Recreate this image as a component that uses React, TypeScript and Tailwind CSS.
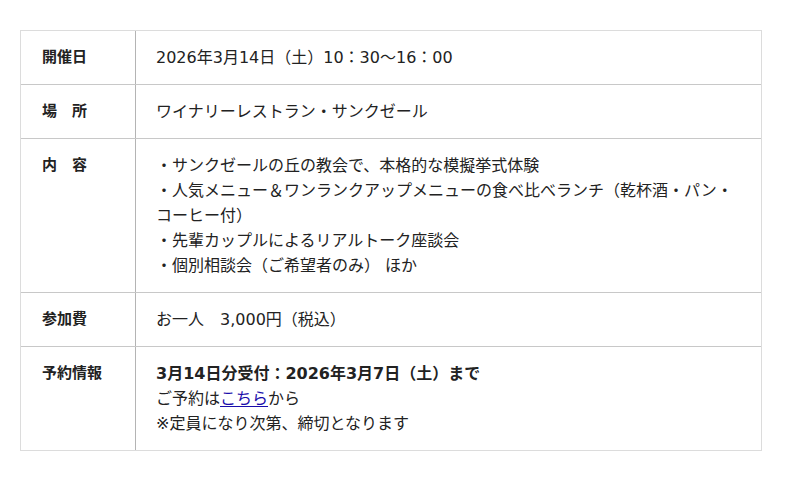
const rows: { label: string; content: React.ReactNode }[] = [
  { label: '開催日', content: '2026年3月14日（土）10：30〜16：00' },
  { label: '場　所', content: 'ワイナリーレストラン・サンクゼール' },
  {
    label: '内　容',
    content: (
      <>
        ・サンクゼールの丘の教会で、本格的な模擬挙式体験
        <br />
        ・人気メニュー＆ワンランクアップメニューの食べ比べランチ（乾杯酒・パン・コーヒー付）
        <br />
        ・先輩カップルによるリアルトーク座談会
        <br />
        ・個別相談会（ご希望者のみ） ほか
      </>
    ),
  },
  { label: '参加費', content: 'お一人　3,000円（税込）' },
  {
    label: '予約情報',
    content: (
      <>
        <span className="font-bold">3月14日分受付：2026年3月7日（土）まで</span>
        <br />
        ご予約は
        <a href="#" className="text-[#1a0dab] underline underline-offset-2">
          こちら
        </a>
        から
        <br />
        ※定員になり次第、締切となります
      </>
    ),
  },
];

export default function App() {
  return (
    <div className="w-[800px] h-[481px] bg-white pt-[30px] px-[20px] font-['DejaVu_Sans','Noto_Sans_CJK_JP',sans-serif] text-[#222]">
      <div className="w-[742px] border border-[#dcdcdc]">
        {rows.map((row, i) => (
          <div
            key={i}
            className={`grid grid-cols-[115px_1fr] ${i < rows.length - 1 ? 'border-b border-[#c8c8c8]' : ''}`}
          >
            {/* 見出し */}
            <div className="border-r border-[#b4b4b4] pl-[21px] py-[14px] text-[15px] leading-[25px] font-bold">
              {row.label}
            </div>
            {/* 内容 */}
            <div className="pl-[20px] pr-[20px] py-[14px] text-[16px] leading-[25px]">
              {row.content}
            </div>
          </div>
        ))}
      </div>
    </div>
  );
}
